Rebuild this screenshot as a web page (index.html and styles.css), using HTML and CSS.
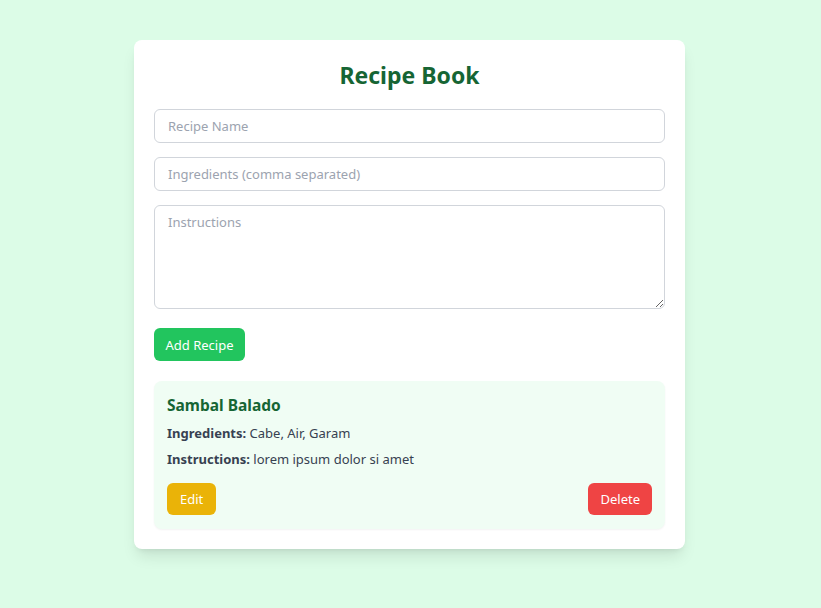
FILE: index.html
```html
<!DOCTYPE html>
<html>
<head>
<meta charset="utf-8">
<link rel="stylesheet" href="styles.css">
</head>
<body>
<div class="card">
  <h1 class="title">Recipe Book</h1>
  <form class="form">
    <input class="field" type="text" placeholder="Recipe Name">
    <input class="field" type="text" placeholder="Ingredients (comma separated)">
    <textarea class="field area" placeholder="Instructions"></textarea>
    <div><button type="button" class="btn btn-add">Add Recipe</button></div>
  </form>
  <div class="recipe">
    <h2 class="recipe-title">Sambal Balado</h2>
    <p class="line"><strong>Ingredients:</strong> Cabe, Air, Garam</p>
    <p class="line"><strong>Instructions:</strong> lorem ipsum dolor si amet</p>
    <div class="actions">
      <button type="button" class="btn btn-edit">Edit</button>
      <button type="button" class="btn btn-del">Delete</button>
    </div>
  </div>
</div>
</body>
</html>
```
FILE: styles.css
```css
* { box-sizing: border-box; }
body {
  margin: 0;
  background: #dcfce7;
  font-family: "Noto Sans", "Open Sans", sans-serif;
  color: #374151;
}
.card {
  width: 551px;
  margin: 40px 0 40px 134px;
  background: #fff;
  border-radius: 8px;
  padding: 20px;
  box-shadow: 0 10px 15px -3px rgba(0,0,0,0.1), 0 4px 6px -4px rgba(0,0,0,0.1);
}
.title {
  margin: 0 0 19px;
  text-align: center;
  font-size: 23px;
  line-height: 30px;
  font-weight: 700;
  color: #166534;
}
.form {
  display: flex;
  flex-direction: column;
  gap: 14px;
}
.field {
  display: block;
  width: 100%;
  height: 34px;
  border: 1px solid #d1d5db;
  border-radius: 6px;
  padding: 6px 13px;
  font-family: inherit;
  font-size: 13px;
  color: #374151;
  outline: none;
}
.field::placeholder { color: #9ca3af; }
.area {
  height: 104px;
  padding-top: 7px;
  resize: vertical;
}
.btn {
  border: none;
  border-radius: 6px;
  color: #fff;
  font-family: inherit;
  font-size: 13px;
  height: 33px;
  padding: 0 12px;
  cursor: pointer;
}
.btn-add { background: #22c55e; margin-top: 5px; padding: 0 11.5px; }
.btn-edit { background: #eab308; height: 32px; padding: 0 13px; }
.btn-del { background: #ef4444; height: 32px; padding: 0 12px; }
.recipe {
  margin-top: 20px;
  background: #f0fdf4;
  border-radius: 8px;
  padding: 12px 13px 14px;
  box-shadow: 0 1px 2px rgba(0,0,0,0.05);
}
.recipe-title {
  margin: 0 0 6px;
  font-size: 15.5px;
  line-height: 24px;
  color: #166534;
  font-weight: 700;
}
.line {
  margin: 0 0 6px;
  font-size: 13px;
  line-height: 20px;
}
.line strong { font-weight: 700; }
.actions {
  margin-top: 14px;
  display: flex;
  justify-content: space-between;
}
```
